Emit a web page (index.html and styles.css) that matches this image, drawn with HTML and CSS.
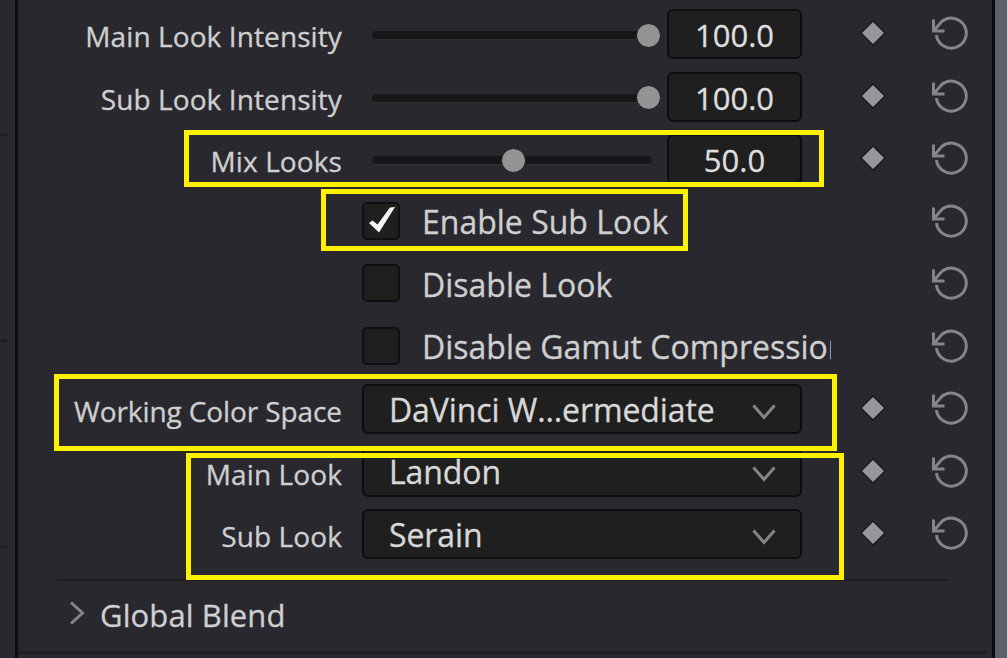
FILE: index.html
```html
<!DOCTYPE html>
<html lang="en">

<head>
    <meta charset="UTF-8">
    <meta name="viewport" content="width=device-width, initial-scale=1.0">
    <title>Inspector</title>
    <link rel="stylesheet" href="styles.css">
</head>

<body>
    <svg width="0" height="0" class="defs">
        <symbol id="diamond" viewBox="0 0 26 26">
            <path d="M13 0 26 13 13 26 0 13Z" fill="#1a1a1c"/>
            <path d="M13 2 24 13 13 24 2 13Z" fill="#96979d"/>
        </symbol>
        <symbol id="reset" viewBox="0 0 40 38">
            <path d="M4.5 17 13 7.3A15 15 0 1 1 7.4 21M4.5 5.5V17H15.5" class="line"/>
        </symbol>
        <symbol id="chevron" viewBox="0 0 26 18">
            <path d="M2.5 2.5 13 14.5 23.5 2.5" class="line"/>
        </symbol>
    </svg>
    <main>
        <div class="side">
            <i></i><i></i><i></i>
        </div>
        <div class="panel">
            <div class="row">
                <label>Main Look Intensity</label>
                <div class="control">
                    <div class="slider"><span class="thumb"></span></div>
                    <div class="number">100.0</div>
                </div>
                <svg class="key"><use href="#diamond"/></svg>
                <svg class="reset"><use href="#reset"/></svg>
            </div>
            <div class="row">
                <label>Sub Look Intensity</label>
                <div class="control">
                    <div class="slider"><span class="thumb"></span></div>
                    <div class="number">100.0</div>
                </div>
                <svg class="key"><use href="#diamond"/></svg>
                <svg class="reset"><use href="#reset"/></svg>
            </div>
            <div class="row">
                <label>Mix Looks</label>
                <div class="control">
                    <div class="slider half"><span class="thumb"></span></div>
                    <div class="number">50.0</div>
                </div>
                <svg class="key"><use href="#diamond"/></svg>
                <svg class="reset"><use href="#reset"/></svg>
            </div>
            <div class="row">
                <div class="control check">
                    <div class="box">
                        <svg viewBox="0 0 34 34"><path d="M5 19 8.5 16.5 13.5 20.5 26 3.5 31 3 15 28.5Z" fill="#f4f4f4"/></svg>
                    </div>
                    <span>Enable Sub Look</span>
                </div>
                <svg class="reset"><use href="#reset"/></svg>
            </div>
            <div class="row">
                <div class="control check">
                    <div class="box"></div>
                    <span>Disable Look</span>
                </div>
                <svg class="reset"><use href="#reset"/></svg>
            </div>
            <div class="row">
                <div class="control check">
                    <div class="box"></div>
                    <span>Disable Gamut Compression</span>
                </div>
                <svg class="reset"><use href="#reset"/></svg>
            </div>
            <div class="row">
                <label class="tight">Working Color Space</label>
                <div class="control select">
                    <span>DaVinci W...ermediate</span>
                    <svg class="arrow"><use href="#chevron"/></svg>
                </div>
                <svg class="key"><use href="#diamond"/></svg>
                <svg class="reset"><use href="#reset"/></svg>
            </div>
            <div class="row">
                <label>Main Look</label>
                <div class="control select">
                    <span>Landon</span>
                    <svg class="arrow"><use href="#chevron"/></svg>
                </div>
                <svg class="key"><use href="#diamond"/></svg>
                <svg class="reset"><use href="#reset"/></svg>
            </div>
            <div class="row">
                <label>Sub Look</label>
                <div class="control select">
                    <span>Serain</span>
                    <svg class="arrow"><use href="#chevron"/></svg>
                </div>
                <svg class="key"><use href="#diamond"/></svg>
                <svg class="reset"><use href="#reset"/></svg>
            </div>
            <div class="group">
                <svg class="expand" viewBox="0 0 16 24"><path d="M2 1.5 13.5 12 2 22.5" class="line"/></svg>
                <span>Global Blend</span>
            </div>
        </div>
        <div class="edge"></div>
    </main>
    <!-- highlight frames over the panel -->
    <div class="mark mark-mix"></div>
    <div class="mark mark-enable"></div>
    <div class="mark mark-space"></div>
    <div class="mark mark-looks"></div>
</body>

</html>
```
FILE: styles.css
```css
* {
    box-sizing: border-box;
}
body {
    margin: 0;
    height: 658px;
    overflow: hidden;
    background: #29282e;
    color: #cfcfd0;
    font-family: "Open Sans", "Noto Sans", sans-serif;
    font-size: 32px;
    -webkit-text-stroke: 0.3px;
}
.defs {
    position: absolute;
}
.line {
    fill: none;
    stroke: #858585;
    stroke-width: 3;
}
main {
    display: flex;
    height: 658px;
}
.side {
    width: 18px;
    border-right: 3px solid #0e0e10;
    padding-top: 133px;
    display: flex;
    flex-direction: column;
    gap: 203px;
}
.side i {
    width: 7px;
    height: 3px;
    background: #1f1f22;
}
.panel {
    width: 974px;
    padding-top: 3px;
}
.edge {
    flex: 1;
    border-left: 3px solid #0c0c0e;
    background: #5b6069;
}
.row {
    display: grid;
    grid-template-columns: 324px 440px 26px 40px;
    column-gap: 20px;
    align-items: center;
    height: 62.5px;
}
.row label {
    grid-column: 1;
    text-align: right;
    font-size: 28px;
    letter-spacing: 0.1px;
    white-space: nowrap;
    padding-top: 4px;
}
.row .tight {
    letter-spacing: -0.1px;
}
.control {
    grid-column: 2;
    display: flex;
    align-items: center;
    white-space: nowrap;
}
.slider {
    width: 280px;
    height: 8px;
    margin: 2px 15px 0 10px;
    border-radius: 4px;
    background: #171717;
    box-shadow: 0 1px 1px #303035;
    display: flex;
    align-items: center;
    justify-content: flex-end;
}
.thumb {
    width: 25px;
    height: 25px;
    border: 1px solid #1b1b1d;
    border-radius: 50%;
    background: #939393;
    margin-right: -9px;
}
.half {
    justify-content: center;
}
.half .thumb {
    margin-right: -2px;
}
.number,
.select {
    height: 50px;
    border: 2px solid #0d0d0e;
    border-radius: 6px;
    background: #1f1f1f;
}
.number {
    width: 135px;
    font-size: 31px;
    line-height: 48px;
    text-align: center;
    color: #dedede;
}
.box {
    flex: none;
    width: 38px;
    height: 38px;
    margin: 0 22px 2px 0;
    border: 2px solid #0f0f10;
    border-radius: 5px;
    background: #1f1f1f;
}
.box svg {
    display: block;
}
.check {
    width: 469px;
    overflow: hidden;
}
.select {
    justify-content: space-between;
    padding: 0 23px 0 25px;
    color: #d8d8d8;
    letter-spacing: -0.1px;
}
.arrow {
    width: 26px;
    height: 18px;
    margin-top: 5px;
}
.key {
    grid-column: 3;
    width: 26px;
    height: 26px;
    margin: 0 0 2px 38px;
}
.reset {
    grid-column: 4;
    width: 40px;
    height: 38px;
    margin: 0 0 2px 61px;
}
.group {
    display: flex;
    align-items: center;
    height: 72px;
    margin: 13.5px 45px 0 39px;
    padding: 0 0 3px 12px;
    border-top: 2px solid #1e1e1e;
    font-size: 31px;
    letter-spacing: 0.1px;
}
.expand {
    width: 16px;
    height: 24px;
    margin: 0 15px 3px 0;
}
.panel::after {
    content: "";
    display: block;
    height: 3px;
    margin-right: 5px;
    background: #1f1f21;
}
.mark {
    position: absolute;
    border: 5px solid #fff200;
}
.mark-mix {
    left: 184px;
    top: 130px;
    width: 640px;
    height: 57px;
}
.mark-enable {
    left: 321px;
    top: 189px;
    width: 367px;
    height: 62px;
}
.mark-space {
    left: 54px;
    top: 374px;
    width: 783px;
    height: 77px;
}
.mark-looks {
    left: 186px;
    top: 453px;
    width: 658px;
    height: 127px;
}
```
